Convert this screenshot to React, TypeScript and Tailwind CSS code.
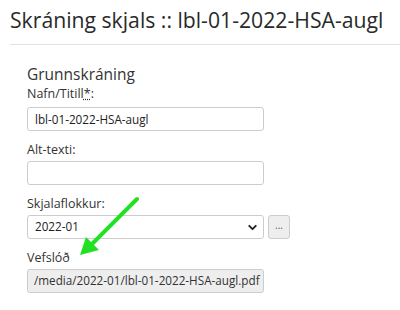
import { ChevronDown } from "lucide-react";

function Label({ children }: { children: React.ReactNode }) {
  return (
    <div className="mt-[11px] whitespace-nowrap text-[12.5px] leading-[16px] text-[#333]">
      {children}
    </div>
  );
}

export default function App() {
  return (
    <div className="relative h-[310px] w-[400px] overflow-hidden bg-white font-['Open_Sans',sans-serif] text-[#333]">
      <h1 className="whitespace-nowrap px-[10px] pt-[6px] text-[21.2px] leading-[28px] text-[#2a2a2a]">
        Skráning skjals :: lbl-01-2022-HSA-augl
      </h1>
      <hr className="ml-[10px] mt-[10px] border-t border-[#e2e2e2]" />

      <div className="pl-[27px] pt-[19px]">
        <div className="whitespace-nowrap text-[15.5px] leading-[20px]">Grunnskráning</div>
        <div className="mt-[2px] whitespace-nowrap text-[12.5px] leading-[16px]">
          Nafn/Titill
          <abbr className="underline decoration-dotted" title="required">
            *
          </abbr>
          :
        </div>
        <input
          readOnly
          value="lbl-01-2022-HSA-augl"
          className="mt-[5px] block h-[24px] w-[237px] rounded-[3px] border border-[#ccc] px-[7px] text-[11.7px] text-[#222] outline-none"
        />
        <Label>Alt-texti:</Label>
        <input
          readOnly
          className="mt-[3px] block h-[24px] w-[237px] rounded-[3px] border border-[#ccc] px-[7px] text-[11.7px] outline-none"
        />
        <Label>Skjalaflokkur:</Label>
        <div className="mt-[3px] flex items-center gap-[4px]">
          <div className="flex h-[24px] w-[237px] items-center justify-between rounded-[3px] border border-[#ccc] bg-white pl-[7px] pr-[4px] text-[11.7px] text-[#222]">
            <span>2022-01</span>
            <ChevronDown size={13} strokeWidth={3.5} className="text-[#222]" />
          </div>
          <div className="flex h-[24px] w-[22px] items-center justify-center rounded-[3px] border border-[#ccc] bg-[#eee] pb-[4px] text-[10px] text-[#555]">
            ...
          </div>
        </div>
        <Label>Vefslóð</Label>
        <div className="mt-[3px] flex h-[24px] w-[237px] items-center whitespace-nowrap rounded-[3px] border border-[#ccc] bg-[#eee] px-[6px] text-[11.7px] text-[#333]">
          /media/2022-01/lbl-01-2022-HSA-augl.pdf
        </div>
      </div>

      <svg
        className="pointer-events-none absolute left-0 top-0"
        width="400"
        height="310"
        viewBox="0 0 400 310"
      >
        <line x1="137" y1="199" x2="92" y2="244" stroke="#22e022" strokeWidth="4" strokeLinecap="round" />
        <polygon points="80,255 86,237 99,250" fill="#22e022" />
      </svg>
    </div>
  );
}
